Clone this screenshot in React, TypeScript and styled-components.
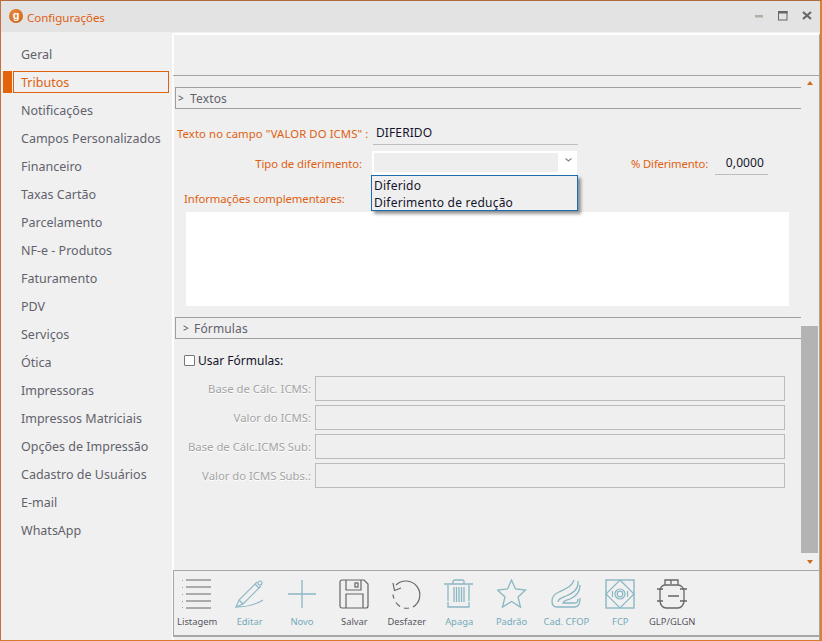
import React from "react";
import styled, { createGlobalStyle } from "styled-components";

const Global = createGlobalStyle`
  html, body { margin: 0; padding: 0; background: #efefef; overflow: hidden; }
  * { box-sizing: border-box; }
  body { font-family: "Noto Sans", "Open Sans", sans-serif; }
`;

const ORANGE = "#e0600f";
const TEAL = "#8ab7c3";
const DARK = "#666666";

const Window = styled.div`
  width: 822px; height: 641px; display: flex; flex-direction: column;
  border: 1px solid #c8703a; border-top-color: #b06a3e; border-bottom-color: #dd7a30;
  border-right: 2px solid #dd8030; background: #efefef;
`;
const TitleBar = styled.header`
  height: 31px; flex: none; background: #e3e3e3; display: flex; align-items: center; padding: 0 8px 0 8px;
`;
const Logo = styled.span`
  width: 14px; height: 14px; border-radius: 50%; background: radial-gradient(circle at 40% 35%, #ee8a3c, #c75a12);
  color: #fff; font: 700 11px/12px "Liberation Sans", sans-serif; text-align: center; flex: none; margin-right: 4px; margin-top: -2px;
`;
const Title = styled.span`
  font-size: 11.5px; color: ${ORANGE}; flex: 1; margin-top: 1px;
`;
const WinButtons = styled.div`
  display: flex; align-items: center; gap: 14px; margin-top: -1px;
`;
const Body = styled.div`
  flex: 1; display: flex; min-height: 0; padding-left: 2px;
`;
const Sidebar = styled.nav`
  width: 169px; flex: none; padding-top: 8px; background: #f0f0f0;
`;
const NavRow = styled.div<{ $active?: boolean }>`
  height: 28px; display: flex; align-items: center; padding: 3px 0;
  padding-left: ${(p) => (p.$active ? 0 : 18)}px;
  font-size: 12.5px; color: ${(p) => (p.$active ? ORANGE : "#62626c")};
`;
const NavMark = styled.span`
  width: 9px; height: 22px; background: #e2650c; flex: none; margin-right: 1px;
`;
const NavBox = styled.span`
  width: 156px; height: 22px; border: 1px solid ${ORANGE}; display: flex; align-items: center; padding-left: 7px;
`;
const Main = styled.main`
  flex: 1; min-width: 0; display: flex; flex-direction: column;
  border-top: 2px solid #fdfdfd; border-left: 2px solid #fdfdfd; border-right: 1px solid #a6a6a6; margin-top: 1px;
`;
const TopPanel = styled.div`
  height: 41px; flex: none; border-bottom: 1px solid #a3a3a3; margin-left: -1px;
`;
const Scroller = styled.div`
  flex: 1; min-height: 0; display: flex;
`;
const Form = styled.div`
  width: 627px; flex: none; padding: 11px 0 0 1px;
`;
const SectionHeader = styled.div`
  height: 22px; border: 1px solid #a0a0a0; border-width: 1px 0 1px 1.5px; display: flex; align-items: center;
  padding-left: 2px; font-size: 12px; color: #62626c; letter-spacing: 0.15px;
`;
const Caret = styled.span<{ $wide?: boolean }>`
  font-size: 10px; width: ${(p) => (p.$wide ? 16 : 12)}px; padding-left: ${(p) => (p.$wide ? 5 : 0)}px; color: #555; flex: none;
`;
const Row = styled.div<{ $h: number; $mt: number }>`
  display: flex; align-items: center; height: ${(p) => p.$h}px; margin-top: ${(p) => p.$mt}px;
`;
const OrangeLabel = styled.label<{ $w: number; $right?: boolean; $pl?: number; $ls?: number }>`
  width: ${(p) => p.$w}px; flex: none; font-size: 11.3px; color: ${ORANGE};
  letter-spacing: ${(p) => p.$ls ?? 0}px;
  text-align: ${(p) => (p.$right ? "right" : "left")}; padding-left: ${(p) => p.$pl ?? 0}px; white-space: nowrap;
`;
const UnderInput = styled.div<{ $w: number; $right?: boolean }>`
  width: ${(p) => p.$w}px; height: 24px; flex: none; border-bottom: 1px solid #bdbdbd;
  color: #14142a; font-size: 12px; display: flex; align-items: center; padding: 0 4px 0 3px; letter-spacing: 0.1px;
  justify-content: ${(p) => (p.$right ? "flex-end" : "flex-start")};
`;
const SelectWrap = styled.div`
  position: relative; width: 205px; height: 24px; margin-left: 10px; flex: none; background: #fff; padding: 2px; display: flex;
`;
const SelectInner = styled.div`
  width: 184px; height: 19px; background: #eeeeee;
`;
const Chevron = styled.svg`
  margin: 4px 0 0 6px;
`;
const Dropdown = styled.div`
  position: absolute; left: -1px; top: 24px; width: 207px; height: 36px; background: #efefef;
  border: 1px solid #1c6db0; box-shadow: 3px 3px 3px rgba(0,0,0,.4); padding: 1px 2px 0; font-size: 12px; color: #14142a; line-height: 17px;
  letter-spacing: 0.22px; z-index: 2;
`;
const PercentLabel = styled.label`
  margin-left: 54px; width: 84px; flex: none; font-size: 11.3px; letter-spacing: -0.15px; color: ${ORANGE}; white-space: nowrap;
`;
const TextArea = styled.div`
  width: 603px; height: 94px; background: #fff; margin: 5px 0 11px 11px;
`;
const CheckRow = styled.div`
  display: flex; align-items: center; height: 20px; margin: 11px 0 6px 9px; font-size: 12px; color: #14142a; gap: 3px;
`;
const Check = styled.span`
  width: 11px; height: 11px; border: 1px solid #777; background: #fff; border-radius: 1px; flex: none;
`;
const FormulaRow = styled.div`
  display: flex; align-items: center; height: 25px; margin-bottom: 4px;
`;
const GrayLabel = styled.label`
  width: 136px; flex: none; text-align: right; font-size: 11.3px; color: #a4a4a4; white-space: nowrap; text-shadow: 0 1px 0 #fff;
`;
const GrayInput = styled.div`
  width: 470px; height: 25px; margin-left: 4px; border: 1px solid #bcbcbc; background: #efefef;
`;
const ScrollBar = styled.div`
  width: 17px; flex: none; display: flex; flex-direction: column; align-items: center;
`;
const Arrow = styled.span<{ $down?: boolean }>`
  width: 0; height: 0; border-left: 3.5px solid transparent; border-right: 3.5px solid transparent; flex: none;
  ${(p) => (p.$down ? "border-top: 4px solid #cc6a1e; margin: 7px 0 3px;" : "border-bottom: 4px solid #cc6a1e; margin-top: 5px;")}
`;
const Track = styled.div`
  flex: 1; width: 100%; display: flex; flex-direction: column; justify-content: flex-end; margin-top: 1px;
`;
const Thumb = styled.div`
  width: 100%; height: 227px; background: #b3b3b3;
`;
const Toolbar = styled.div`
  height: 67px; flex: none; margin: 3px 0 3px -1px; border: 1px solid #a6a6a6; border-bottom-width: 2px; border-right: 0;
  display: flex; background: #f0f0f0;
`;
const Tool = styled.div<{ $ml?: number; $dim?: boolean }>`
  width: 52.4px; flex: none; display: flex; flex-direction: column; align-items: center; padding-top: 8px;
  margin-left: ${(p) => p.$ml ?? 0}px; font-size: 9.4px; color: ${(p) => (p.$dim ? "#74aaba" : "#56565e")}; white-space: nowrap; gap: 5.5px;
  line-height: 13px;
`;

const Ic: React.FC<{ children: React.ReactNode; c: string }> = ({ children, c }) => (
  <svg width="30" height="30" viewBox="0 0 30 30" fill="none" stroke={c} strokeWidth="1.2">{children}</svg>
);

const nav = ["Geral","Tributos","Notificações","Campos Personalizados","Financeiro","Taxas Cartão","Parcelamento","NF-e - Produtos","Faturamento","PDV","Serviços","Ótica","Impressoras","Impressos Matriciais","Opções de Impressão","Cadastro de Usuários","E-mail","WhatsApp"];
const formulas = ["Base de Cálc. ICMS:","Valor do ICMS:","Base de Cálc.ICMS Sub:","Valor do ICMS Subs.:"];

export default function App() {
  return (
    <>
      <Global />
      <Window>
        <TitleBar>
          <Logo>g</Logo>
          <Title>Configurações</Title>
          <WinButtons>
            <svg width="10" height="10" viewBox="0 0 10 10"><rect x="1" y="4" width="8" height="2.500" fill="#b0b0a4" /></svg>
            <svg width="10" height="10" viewBox="0 0 10 10" fill="none"><rect x=".5" y=".5" width="8.500" height="8.500" stroke="#666" /><rect x="0" y="0" width="9.500" height="2.500" fill="#666" /></svg>
            <svg width="10" height="10" viewBox="0 0 10 10"><path d="M1 1l8 7M9 1L1 8" stroke="#666" strokeWidth="2.200" /></svg>
          </WinButtons>
        </TitleBar>
        <Body>
          <Sidebar>
            {nav.map((n) =>
              n === "Tributos" ? (
                <NavRow key={n} $active><NavMark /><NavBox>{n}</NavBox></NavRow>
              ) : (
                <NavRow key={n}>{n}</NavRow>
              )
            )}
          </Sidebar>
          <Main>
            <TopPanel />
            <Scroller>
              <Form>
                <SectionHeader><Caret>&gt;</Caret>Textos</SectionHeader>
                <Row $h={24} $mt={12}>
                  <OrangeLabel $w={198} $pl={2} $ls={0.1}>Texto no campo "VALOR DO ICMS" :</OrangeLabel>
                  <UnderInput $w={205}>DIFERIDO</UnderInput>
                </Row>
                <Row $h={24} $mt={6}>
                  <OrangeLabel $w={187} $right $ls={-0.05}>Tipo de diferimento:</OrangeLabel>
                  <SelectWrap>
                    <SelectInner />
                    <Chevron width="9" height="6" viewBox="0 0 9 6"><path d="M1.500 1.500l3 2.500 3-2.500" fill="none" stroke="#888" strokeWidth="1.200" /></Chevron>
                    <Dropdown>Diferido<br />Diferimento de redução</Dropdown>
                  </SelectWrap>
                  <PercentLabel>% Diferimento:</PercentLabel>
                  <UnderInput $w={53} $right>0,0000</UnderInput>
                </Row>
                <Row $h={18} $mt={14}>
                  <OrangeLabel $w={180} $pl={9} $ls={-0.07}>Informações complementares:</OrangeLabel>
                </Row>
                <TextArea />
                <SectionHeader><Caret $wide>&gt;</Caret>Fórmulas</SectionHeader>
                <CheckRow><Check />Usar Fórmulas:</CheckRow>
                {formulas.map((f) => (
                  <FormulaRow key={f}><GrayLabel>{f}</GrayLabel><GrayInput /></FormulaRow>
                ))}
              </Form>
              <ScrollBar>
                <Arrow />
                <Track><Thumb /></Track>
                <Arrow $down />
              </ScrollBar>
            </Scroller>
            <Toolbar>
              <Tool $ml={-3}>
                <Ic c={DARK}><path d="M4 2h25M4 9h25M4 16h25M4 23h25M4 30h25" strokeWidth="1.200" transform="translate(0 -1)" /><path d="M0 1v1M0 8v1M0 15v1M0 22v1M0 28v1" /></Ic>
                Listagem
              </Tool>
              <Tool $dim>
                <Ic c={TEAL}><path d="M1 28l3-7L20 5l4 4L8 25z M4 21l4 4 M20 5l2-2 M24 9l2-2" strokeWidth="1.100" /><circle cx="25" cy="4" r="2" strokeWidth="1.100" /><path d="M1 28c9 0 19-2 27-7" strokeWidth="1.100" /></Ic>
                Editar
              </Tool>
              <Tool $dim>
                <Ic c={TEAL}><path d="M15 1v28M1 15h28" strokeWidth="1.300" /></Ic>
                Novo
              </Tool>
              <Tool>
                <Ic c={DARK}><path d="M3 1h22l4 4v22a2 2 0 0 1-2 2H3a2 2 0 0 1-2-2V3a2 2 0 0 1 2-2zM7 1v10h15V1M7 29V15h17v14" strokeWidth="1.200" /><rect x="16" y="4" width="3" height="4" /></Ic>
                Salvar
              </Tool>
              <Tool>
                <Ic c={DARK}><path d="M4 6A14 14 0 1 1 21 28" strokeWidth="1.200" /><path d="M17 29a14 14 0 0 1-5 0M8 27.500a14 14 0 0 1-4-4M2 19.500a14 14 0 0 1-1-4" strokeWidth="1.200" /><path d="M1 4l1.500 7.500L9 9" strokeWidth="1.200" /></Ic>
                Desfazer
              </Tool>
              <Tool $dim>
                <Ic c={TEAL}><path d="M0 5h29M9 5V2q0-1 2-1h7q2 0 2 1v3M4 6v16M25 6v16M4 23v5h21v-5M10 8v15M12.500 8v15M15 8v15M17.500 8v15M20 8v15" strokeWidth="1.300" /></Ic>
                Apaga
              </Tool>
              <Tool $dim>
                <Ic c={TEAL}><path d="M14.500 1l4 9 10 1-7.500 7 2.500 10-9-5.500L5.500 28 8 18 .5 11l10-1z" strokeWidth="1.300" /></Ic>
                Padrão
              </Tool>
              <Tool $dim $ml={2.5}>
                <Ic c={TEAL}><path d="M23 1C21 8 14 10 8 13 3 15 1 18 1 22c0 4 2 6 5 6h18c3 0 5-2 5-9" strokeWidth="1.300" /><path d="M27 2c1 8-4 12-12 15-5 2-8 3-8 6" strokeWidth="1.300" /><path d="M29 6c0 7-3 11-10 14-3 1-7 2-7 4h12c2 0 3-1 3-4" strokeWidth="1.300" /></Ic>
                Cad. CFOP
              </Tool>
              <Tool $dim $ml={1.5}>
                <Ic c={TEAL}><rect x="1" y="1" width="28" height="28" strokeWidth="1.400" /><path d="M15 1l14 14-14 14L1 15z" strokeWidth="1.200" /><circle cx="15" cy="15" r="5" /><circle cx="15" cy="15" r="2.800" /><path d="M7.500 12v6M22.500 12v6" /></Ic>
                FCP
              </Tool>
              <Tool $ml={-0.5}>
                <Ic c={DARK}><path d="M8 6V1h13v5M14 1v4M8 6h13c3 0 6 3 6 6v10c0 4-3 7-6 7H9c-3 0-6-3-6-7V12c0-3 2-6 5-6z" strokeWidth="1.300" /><path d="M0 10h6M23 10h7M0 22h6M23 22h7M11 17h11" strokeWidth="1.300" /></Ic>
                GLP/GLGN
              </Tool>
            </Toolbar>
          </Main>
        </Body>
      </Window>
    </>
  );
}
